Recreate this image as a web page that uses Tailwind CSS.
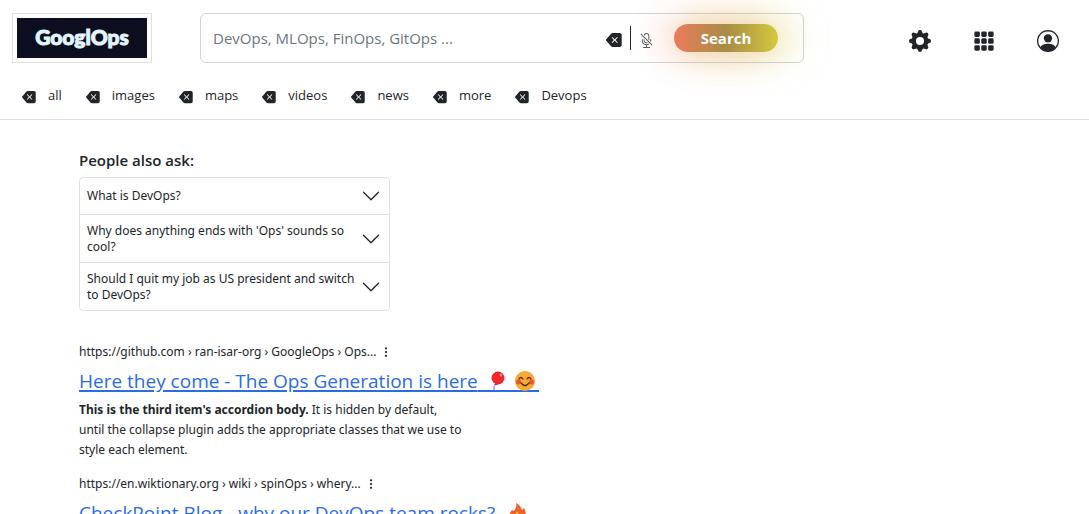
<!DOCTYPE html>
<html lang="en">
<head>
<meta charset="utf-8">
<meta name="viewport" content="width=device-width, initial-scale=1">
<title>GooglOps</title>
<script src="https://cdn.jsdelivr.net/npm/@tailwindcss/browser@4"></script>
</head>
<body class="h-screen overflow-hidden bg-white text-[#212529] font-['Open_Sans',sans-serif]">
<svg class="hidden" aria-hidden="true">
  <symbol id="backspace" viewBox="0 0 16 16"><path d="M15.683 3a2 2 0 0 0-2-2h-7.08a2 2 0 0 0-1.519.698L.241 7.35a1 1 0 0 0 0 1.302l4.843 5.65A2 2 0 0 0 6.603 15h7.08a2 2 0 0 0 2-2V3zM5.829 5.854a.5.5 0 1 1 .707-.708l2.147 2.147 2.146-2.147a.5.5 0 1 1 .707.708L9.39 8l2.146 2.146a.5.5 0 0 1-.707.708L8.683 8.707l-2.147 2.147a.5.5 0 0 1-.707-.708L7.976 8 5.829 5.854z"/></symbol>
  <symbol id="chevron" viewBox="0 0 16 16"><path fill-rule="evenodd" d="M1.646 4.646a.5.5 0 0 1 .708 0L8 10.293l5.646-5.647a.5.5 0 0 1 .708.708l-6 6a.5.5 0 0 1-.708 0l-6-6a.5.5 0 0 1 0-.708z"/></symbol>
  <symbol id="dots" viewBox="0 0 16 16"><path d="M9.5 13a1.5 1.5 0 1 1-3 0 1.5 1.5 0 0 1 3 0zm0-5a1.5 1.5 0 1 1-3 0 1.5 1.5 0 0 1 3 0zm0-5a1.5 1.5 0 1 1-3 0 1.5 1.5 0 0 1 3 0z"/></symbol>
</svg>

<header class="border-b border-[#dee2e6] pb-[14px]">
  <div class="flex items-center pl-3 pt-[13px] pr-[30px]">
    <a href="#" class="shrink-0 border border-[#dee2e6] p-1 w-[140px] h-[50px]">
      <span class="flex h-full items-center justify-center bg-[#0d0f20] pb-[2px] text-[21px] leading-6 font-black text-[#e0f5fc] font-['Lato',sans-serif] [-webkit-text-stroke:1px_#e0f5fc]">GooglOps</span>
    </a>
    <form class="ml-12 flex h-[50px] min-w-0 max-w-[604px] grow items-center rounded-md border border-[#ced4da] pl-3 pr-[25px]">
      <input type="text" aria-label="Search" placeholder="DevOps, MLOps, FinOps, GitOps ..." class="min-w-0 grow bg-transparent text-[15px] leading-6 outline-none placeholder:text-[#6c757d]">
      <button type="button" aria-label="Clear"><svg class="mt-1 size-4" fill="currentColor"><use href="#backspace"/></svg></button>
      <span class="ml-2 h-6 w-px bg-[#212529]"></span>
      <button type="button" aria-label="Voice search" class="ml-2"><svg class="mt-1 size-[15px]" viewBox="0 0 16 16" fill="#555a5f"><path d="M13 8c0 .564-.094 1.107-.266 1.613l-.814-.814A4.02 4.02 0 0 0 12 8V7a.5.5 0 0 1 1 0v1zm-5 4c.818 0 1.578-.245 2.212-.667l.718.719a4.973 4.973 0 0 1-2.43.923V15h3a.5.5 0 0 1 0 1h-7a.5.5 0 0 1 0-1h3v-2.025A5 5 0 0 1 3 8V7a.5.5 0 0 1 1 0v1a4 4 0 0 0 4 4zm3-9v4.879l-1-1V3a2 2 0 0 0-3.997-.118l-.845-.845A3.001 3.001 0 0 1 11 3z"/><path d="m9.486 10.607-.748-.748A2 2 0 0 1 6 8v-.878l-1-1V8a3 3 0 0 0 4.486 2.607zm-7.84-9.253 12 12 .708-.708-12-12-.708.708z"/></svg></button>
      <button type="submit" class="ml-5 h-7 w-[104px] rounded-full bg-linear-to-r from-[#eb7a5a] via-[#a78c46] to-[#d3c93d] text-[15px] leading-6 font-bold text-white shadow-[-12px_0_36px_rgba(235,100,70,0.3),12px_0_36px_rgba(215,205,60,0.5)]">Search</button>
    </form>
    <nav aria-label="Account" class="ml-auto flex shrink-0 items-center gap-[42px] pt-[6px]">
      <button type="button" aria-label="Settings"><svg class="size-[22px]" viewBox="0 0 16 16" fill="currentColor"><path d="M9.405 1.05c-.413-1.4-2.397-1.4-2.81 0l-.1.34a1.464 1.464 0 0 1-2.105.872l-.31-.17c-1.283-.698-2.686.705-1.987 1.987l.169.311c.446.82.023 1.841-.872 2.105l-.34.1c-1.4.413-1.4 2.397 0 2.81l.34.1a1.464 1.464 0 0 1 .872 2.105l-.17.31c-.698 1.283.705 2.686 1.987 1.987l.311-.169a1.464 1.464 0 0 1 2.105.872l.1.34c.413 1.4 2.397 1.4 2.81 0l.1-.34a1.464 1.464 0 0 1 2.105-.872l.31.17c1.283.698 2.686-.705 1.987-1.987l-.169-.311a1.464 1.464 0 0 1 .872-2.105l.34-.1c1.4-.413 1.4-2.397 0-2.81l-.34-.1a1.464 1.464 0 0 1-.872-2.105l.17-.31c.698-1.283-.705-2.686-1.987-1.987l-.311.169a1.464 1.464 0 0 1-2.105-.872l-.1-.34zM8 10.93a2.929 2.929 0 1 1 0-5.86 2.929 2.929 0 0 1 0 5.858z"/></svg></button>
      <button type="button" aria-label="Apps"><svg class="size-[22px]" viewBox="0 0 16 16" fill="currentColor"><path d="M1 2a1 1 0 0 1 1-1h2a1 1 0 0 1 1 1v2a1 1 0 0 1-1 1H2a1 1 0 0 1-1-1V2zm5 0a1 1 0 0 1 1-1h2a1 1 0 0 1 1 1v2a1 1 0 0 1-1 1H7a1 1 0 0 1-1-1V2zm5 0a1 1 0 0 1 1-1h2a1 1 0 0 1 1 1v2a1 1 0 0 1-1 1h-2a1 1 0 0 1-1-1V2zM1 7a1 1 0 0 1 1-1h2a1 1 0 0 1 1 1v2a1 1 0 0 1-1 1H2a1 1 0 0 1-1-1V7zm5 0a1 1 0 0 1 1-1h2a1 1 0 0 1 1 1v2a1 1 0 0 1-1 1H7a1 1 0 0 1-1-1V7zm5 0a1 1 0 0 1 1-1h2a1 1 0 0 1 1 1v2a1 1 0 0 1-1 1h-2a1 1 0 0 1-1-1V7zM1 12a1 1 0 0 1 1-1h2a1 1 0 0 1 1 1v2a1 1 0 0 1-1 1H2a1 1 0 0 1-1-1v-2zm5 0a1 1 0 0 1 1-1h2a1 1 0 0 1 1 1v2a1 1 0 0 1-1 1H7a1 1 0 0 1-1-1v-2zm5 0a1 1 0 0 1 1-1h2a1 1 0 0 1 1 1v2a1 1 0 0 1-1 1h-2a1 1 0 0 1-1-1v-2z"/></svg></button>
      <button type="button" aria-label="Profile"><svg class="size-[22px]" viewBox="0 0 16 16" fill="currentColor"><path d="M11 6a3 3 0 1 1-6 0 3 3 0 0 1 6 0z"/><path fill-rule="evenodd" d="M0 8a8 8 0 1 1 16 0A8 8 0 0 1 0 8zm8-7a7 7 0 0 0-5.468 11.37C3.242 11.226 4.805 10 8 10s4.757 1.225 5.468 2.37A7 7 0 0 0 8 1z"/></svg></button>
    </nav>
  </div>
  <nav aria-label="Search categories" class="mt-[22px] flex gap-6 pl-[22px] text-[13px] leading-5">
    <a href="#" class="flex items-center gap-3"><svg class="mt-1 size-3.5" fill="currentColor"><use href="#backspace"/></svg>all</a>
    <a href="#" class="flex items-center gap-3"><svg class="mt-1 size-3.5" fill="currentColor"><use href="#backspace"/></svg>images</a>
    <a href="#" class="flex items-center gap-3"><svg class="mt-1 size-3.5" fill="currentColor"><use href="#backspace"/></svg>maps</a>
    <a href="#" class="flex items-center gap-3"><svg class="mt-1 size-3.5" fill="currentColor"><use href="#backspace"/></svg>videos</a>
    <a href="#" class="flex items-center gap-3"><svg class="mt-1 size-3.5" fill="currentColor"><use href="#backspace"/></svg>news</a>
    <a href="#" class="flex items-center gap-3"><svg class="mt-1 size-3.5" fill="currentColor"><use href="#backspace"/></svg>more</a>
    <a href="#" class="flex items-center gap-3"><svg class="mt-1 size-3.5" fill="currentColor"><use href="#backspace"/></svg>Devops</a>
  </nav>
</header>

<main class="px-[79px] pt-[30px]">
  <section>
    <h2 class="text-[15px] leading-5 font-semibold">People also ask:</h2>
    <div class="mt-[7px] max-w-[311px] divide-y divide-[#dee2e6] rounded-[4px] border border-[#dee2e6] text-[12px] leading-4 font-['Noto_Sans',sans-serif]">
      <button type="button" class="flex min-h-[37px] w-full items-center justify-between pl-[7px] pr-2 text-left"><span>What is DevOps?</span><svg class="size-5 shrink-0" fill="currentColor"><use href="#chevron"/></svg></button>
      <button type="button" class="flex min-h-12 w-full items-center justify-between pl-[7px] pr-2 text-left"><span>Why does anything ends with 'Ops' sounds so cool?</span><svg class="size-5 shrink-0" fill="currentColor"><use href="#chevron"/></svg></button>
      <button type="button" class="flex min-h-[47px] w-full items-center justify-between pl-[7px] pr-2 text-left"><span>Should I quit my job as US president and switch to DevOps?</span><svg class="size-5 shrink-0" fill="currentColor"><use href="#chevron"/></svg></button>
    </div>
  </section>

  <article class="mt-[31px]">
    <div class="flex items-center gap-1 text-[12px] leading-5 font-['Noto_Sans',sans-serif]"><cite class="not-italic">https://github.com › ran-isar-org › GoogleOps › Ops...</cite><button type="button" aria-label="More options"><svg class="size-3" fill="currentColor"><use href="#dots"/></svg></button></div>
    <h3 class="mt-[3px] text-[19px] leading-8"><a href="#" class="text-[#2b6be4] underline decoration-2 underline-offset-2">Here they come - The Ops Generation is here<svg class="inline-block h-5 w-[61px] overflow-visible align-[-3px]" viewBox="0 0 61 20"><path d="M0 20h61" stroke="#2b6be4" stroke-width="2"/><path d="M18 13q-3 2-2 6" fill="none" stroke="#7b6bd0"/><path d="M18 12l-2 2h4z" fill="#c8202b"/><ellipse cx="20" cy="7" rx="6.500" ry="6.500" fill="#f0282d"/><circle cx="23" cy="4" r="1.500" fill="#ff8787"/><g transform="translate(37)"><circle cx="10" cy="10" r="10" fill="#f9a832"/><circle cx="3.500" cy="11" r="2.500" fill="#ef5336"/><circle cx="16.500" cy="11" r="2.500" fill="#ef5336"/><path d="M4 8q2-3 4 0M12 8q2-3 4 0M6 12q4 5 8 0" fill="none" stroke="#46331f" stroke-width="1.300" stroke-linecap="round"/></g></svg></a></h3>
    <p class="mt-[3px] text-[12px] leading-5 font-['Noto_Sans',sans-serif]"><strong>This is the third item's accordion body.</strong> It is hidden by default,<br>until the collapse plugin adds the appropriate classes that we use to<br>style each element.</p>
  </article>

  <article class="mt-[14px]">
    <div class="flex items-center gap-1 text-[12px] leading-5 font-['Noto_Sans',sans-serif]"><cite class="not-italic">https://en.wiktionary.org › wiki › spinOps › whery...</cite><button type="button" aria-label="More options"><svg class="size-3" fill="currentColor"><use href="#dots"/></svg></button></div>
    <h3 class="mt-[3px] text-[19px] leading-8"><a href="#" class="text-[#2b6be4] underline decoration-2 underline-offset-2">CheckPoint Blog - why our DevOps team rocks?<svg class="inline-block h-5 w-9 overflow-visible align-[-3px]" viewBox="0 0 36 20"><path d="M0 20h36" stroke="#2b6be4" stroke-width="2"/><path d="M21 0c5 3 5 5 6 7l2-2c4 8 1 15-7 15s-10-8-5-13l2 1c2-3 3-5 2-8z" fill="#f4602c"/><path d="M22 7c0 4 5 5 4 9-1 4-8 4-8 0 0-4 4-5 4-9z" fill="#fbc02d"/></svg></a></h3>
  </article>
</main>
</body>
</html>
